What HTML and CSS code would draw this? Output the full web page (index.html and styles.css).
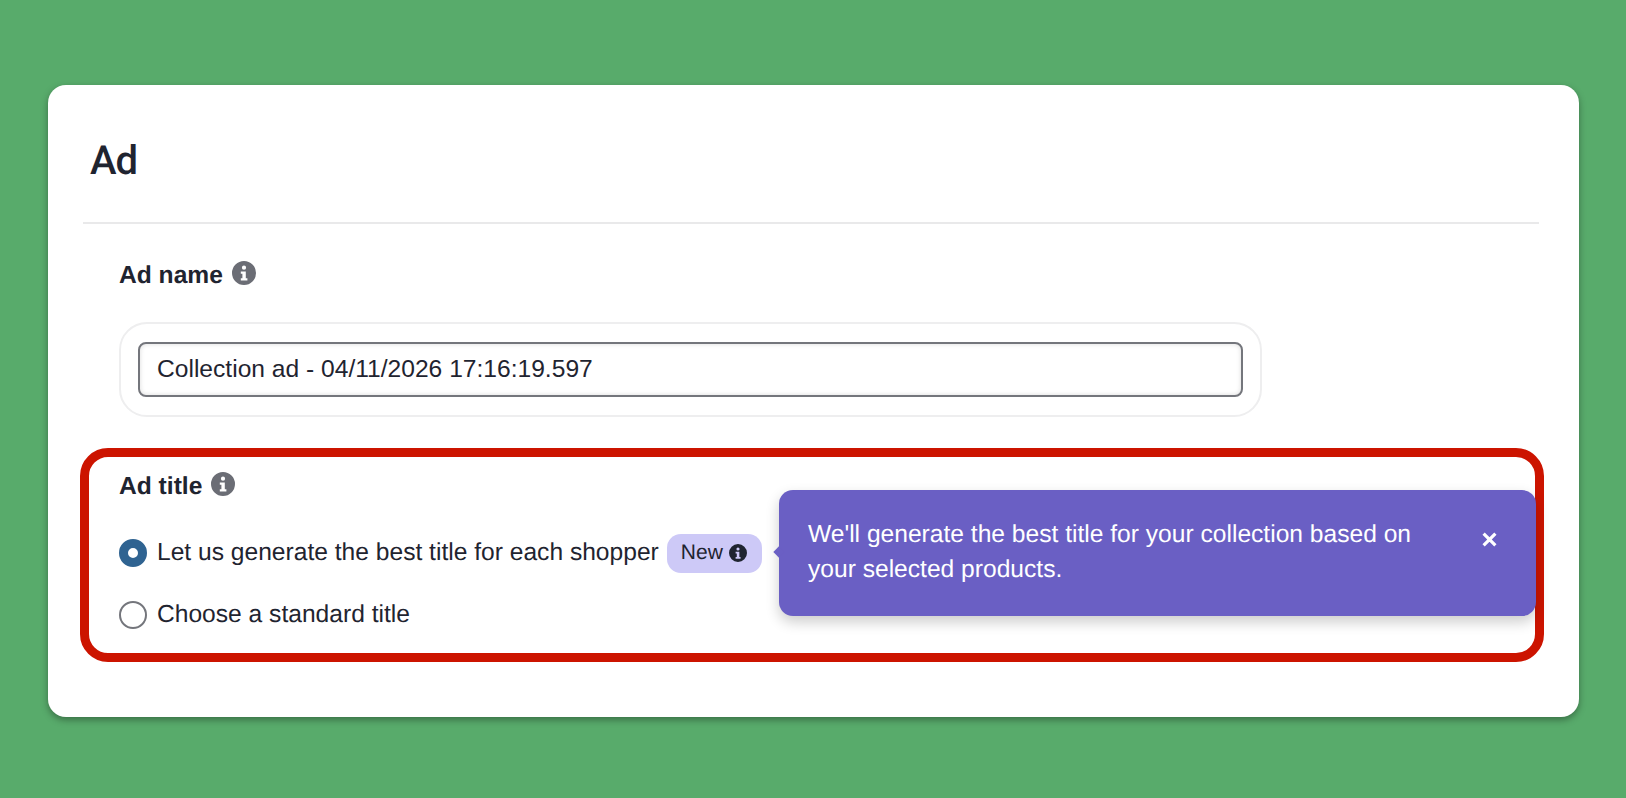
FILE: index.html
```html
<!DOCTYPE html>
<html lang="en">
<head>
    <meta charset="UTF-8">
    <title>Ad</title>
    <link rel="stylesheet" href="styles.css">
</head>

<body>
    <svg class="icon-defs" width="0" height="0" aria-hidden="true">
        <symbol id="info" viewBox="0 0 24 24">
            <path fill-rule="evenodd" d="M12 0a12 12 0 1 1 0 24a12 12 0 0 1 0-24zM12 4.6a2.1 2.1 0 1 0 0 4.2a2.1 2.1 0 0 0 0-4.2zM8.8 10.4v2.4h1.6v4.4H8.8v2.4h6.6v-2.4h-1.6v-6.8z"/>
        </symbol>
    </svg>

    <main class="card">
        <header class="card-header">
            <h1>Ad</h1>
        </header>

        <section class="ad-name">
            <h2 class="field-label">Ad name <svg class="info-icon"><use href="#info"/></svg></h2>
            <div class="input-wrap">
                <input class="text-input" type="text" value="Collection ad - 04/11/2026 17:16:19.597">
            </div>
        </section>

        <section class="ad-title">
            <h2 class="field-label">Ad title <svg class="info-icon"><use href="#info"/></svg></h2>
            <label class="radio-row">
                <input type="radio" name="title" checked>
                <span class="radio-text">Let us generate the best title for each shopper</span>
                <span class="badge">New <svg class="badge-icon"><use href="#info"/></svg></span>
            </label>
            <label class="radio-row">
                <input type="radio" name="title">
                <span class="radio-text">Choose a standard title</span>
            </label>

            <div class="tooltip">
                <p>We'll generate the best title for your collection based on your selected products.</p>
                <svg class="tooltip-close" viewBox="0 0 14 14"><path d="M1.5 1.5l11 11M12.5 1.5l-11 11"/></svg>
            </div>
        </section>
    </main>
</body>
</html>
```

FILE: styles.css
```css
* {
    box-sizing: border-box;
}

body {
    margin: 0;
    padding: 85px 0 0 48px;
    height: 798px;
    overflow: hidden;
    background-color: #58ab6b;
    color: #1f2430;
    font-family: "Liberation Sans", Arial, sans-serif;
    font-size: 24.6px;
    text-rendering: geometricPrecision;
}

.icon-defs {
    position: absolute;
}

.card {
    width: 1531px;
    height: 632px;
    padding: 0 40px 0 32px;
    background-color: #fff;
    border-radius: 18px;
    box-shadow: 0 3px 7px rgba(0, 0, 0, 0.35);
}

.card-header {
    height: 139px;
    margin-left: 3px;
    padding: 52px 0 0 7px;
    border-bottom: 2px solid #e9e9ea;
}

.card-header h1 {
    margin: 0;
    font-family: Roboto, "Liberation Sans", sans-serif;
    font-size: 40px;
    line-height: 48px;
    font-weight: 500;
    letter-spacing: -1px;
}

.field-label {
    display: flex;
    align-items: center;
    gap: 9px;
    margin: 0;
    font-size: 24.6px;
    line-height: 30px;
    font-weight: bold;
}

.info-icon {
    width: 24px;
    height: 24px;
    margin-top: -6px;
    fill: #6b6d75;
}

.ad-name {
    padding: 37px 0 0 39px;
}

.input-wrap {
    width: 1143px;
    margin-top: 31px;
    padding: 18px 17px;
    border: 2px solid #eeeeef;
    border-radius: 28px;
}

.text-input {
    display: block;
    width: 100%;
    height: 55px;
    padding: 0 16px 2px 17px;
    border: 2px solid #74767c;
    border-radius: 8px;
    box-shadow: inset 0 0 5px rgba(0, 0, 0, 0.14);
    color: inherit;
    font-family: inherit;
    font-size: 24.6px;
}

.ad-title {
    position: relative;
    width: 1464px;
    height: 214px;
    margin-top: 31px;
    padding: 15px 0 0 30px;
    border: 9px solid #cc1400;
    border-radius: 28px;
}

.ad-title .field-label {
    margin-bottom: 31px;
}

.radio-row {
    display: flex;
    align-items: center;
    height: 40px;
    margin-bottom: 22px;
}

.radio-row input {
    appearance: none;
    flex: none;
    width: 28px;
    height: 28px;
    margin: 0 10px 0 0;
    border: 2px solid #74767c;
    border-radius: 50%;
    background-color: #fff;
}

.radio-row input:checked {
    border: 9px solid #2f6391;
}

.radio-text {
    margin-top: -1px;
}

.badge {
    display: flex;
    align-items: center;
    gap: 6px;
    height: 39px;
    margin-left: 8px;
    padding: 0 15px 0 14px;
    background-color: #cdc9f7;
    border-radius: 14px;
    font-size: 21px;
}

.badge-icon {
    width: 18px;
    height: 18px;
    fill: #1f2430;
}

.tooltip {
    position: absolute;
    top: 33px;
    left: 690px;
    display: flex;
    justify-content: space-between;
    width: 757px;
    height: 126px;
    padding: 27px 39px 0 29px;
    background-color: #6a5fc4;
    border-radius: 14px;
    box-shadow: 0 6px 14px rgba(0, 0, 0, 0.2);
    color: #fff;
    font-size: 24.6px;
    line-height: 35px;
}

.tooltip::before {
    content: "";
    position: absolute;
    top: 58px;
    left: -4px;
    width: 8px;
    height: 8px;
    background-color: #6a5fc4;
    transform: rotate(45deg);
}

.tooltip p {
    width: 620px;
    margin: 0;
}

.tooltip-close {
    flex: none;
    width: 15px;
    height: 15px;
    margin-top: 15px;
    fill: none;
    stroke: #fff;
    stroke-width: 3;
}
```
